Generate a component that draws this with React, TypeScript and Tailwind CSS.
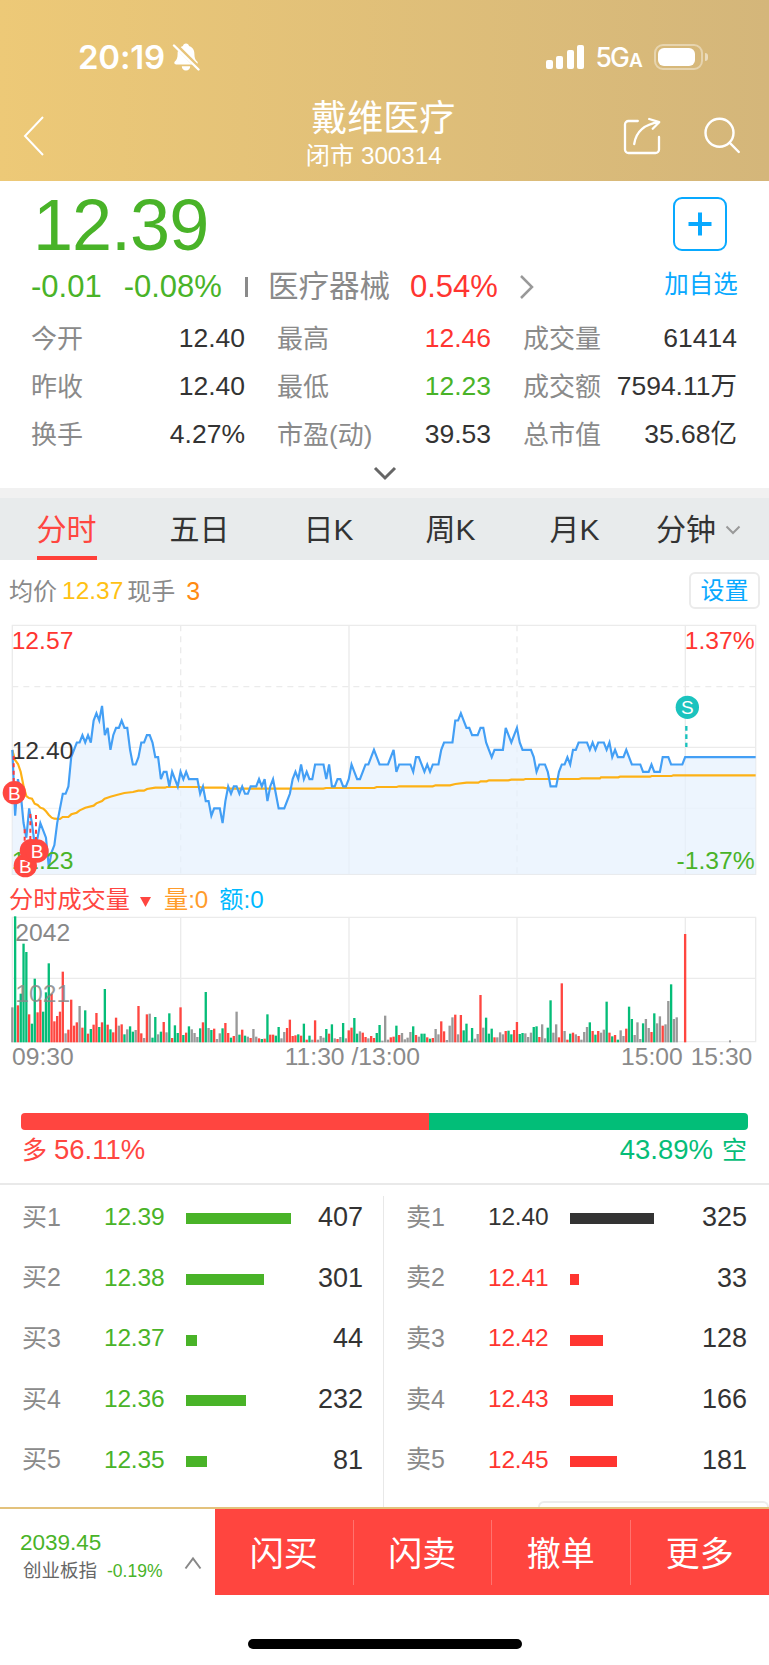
import clsx from "clsx";

const TICKS = [
  0, -9, -4, -6, -10, -12, -8, -10, -13, -12, -10, -11, -12, -16, -14, -13, -10, -8, -6, -6,
  -5, -1, 0, 1, 1, 2, 1, 2, 1, 4, 5, 4, 6, 2, 3, 0, 2, 3, 3, 4,
  3, 3, 0, -2, -2, -1, 1, 1, 2, 2, 1, -1, -1, -4, -3, -3, -5, -3, -4, -5,
  -3, -4, -3, -4, -4, -4, -4, -6, -5, -7, -7, -9, -8, -8, -8, -10, -7, -5, -6, -5,
  -5, -6, -5, -6, -6, -5, -5, -5, -4, -5, -4, -7, -5, -4, -6, -8, -8, -8, -7, -6,
  -4, -3, -4, -2, -4, -3, -4, -4, -2, -2, -2, -2, -4, -2, -5, -5, -4, -4, -5, -5,
  -4, -2, -3, -4, -4, -3, -2, -2, -1, 0, -1, -2, -2, -2, -2, -1, 0, -3, -2, -2,
  -2, -2, -2, -3, -1, -1, -2, -3, -2, -3, -2, -2, -2, 0, 1, 1, 1, 1, 4, 4,
  5, 4, 3, 3, 2, 2, 2, 3, 3, 1, 0, -1, 0, 0, 0, 0, 3, 2, 1, 2,
  3, 1, 0, 0, 0, 0, -1, -3, -2, -2, -2, -3, -5, -5, -5, -3, -2, -2, -1, -2,
  0, 0, 1, 1, 1, 1, 0, 1, 0, 1, 1, 1, 0, 1, -1, 0, -1, -1, -1, 0,
  -1, -2, -2, -2, -2, -3, -3, -3, -2, -3, -3, -3, -1, -1, -1, -2, -2, -2, -2, -2,
  -1,
];

const AVERAGE =
  "37,420 45,450 54,462 62,485 71,530 79,558 87,564 96,566 104,581 113,585 121,593 130,596 138,604 146,614 155,623 163,626 180,627 188,621 205,621 214,613 230,608 239,601 256,593 281,587 289,580 306,573 314,566 331,560 350,555 373,549 399,546 415,542 432,542 441,537 466,533 495,533 500,531 600,531 605,533 670,533 685,536 970,536 978,534 1123,534 1130,531 1190,531 1197,529 1298,529 1307,526 1350,526 1366,522 1400,518 1435,518 1442,514 1460,514 1467,511 1525,511 1534,509 1570,509 1576,507 1736,507 1744,505 1800,505 1803,502 1855,502 1860,500 1950,500 1955,498 2015,498 2020,496 2267,496";

// r = up, g = down, d = flat
const VOLUMES =
  "d105 g378 r111 g146 g296 g271 r84 g56 g191 r90 r128 g92 g150 g237 r145 r63 r79 r92 r212 d27 " +
  "r38 r128 r50 r60 d109 r44 g96 r26 g40 r53 r88 g46 r60 g160 r53 g39 r30 r74 d50 r54 " +
  "g24 d39 g48 g32 d37 r109 r27 d13 r84 d86 g14 g76 d24 g32 r61 d30 g87 r13 g51 g28 " +
  "r105 g22 r29 g48 d39 d28 d16 g42 r60 g151 d43 g37 r41 d10 d27 g42 r58 r28 g14 r19 " +
  "d92 g23 r38 g20 d17 r13 d40 d17 r12 g10 r11 g84 r23 r23 g20 g46 d12 d31 r43 r68 " +
  "r19 r21 g24 r20 g56 r8 g20 d8 r66 d8 d19 d14 g40 r26 g54 d12 r10 d16 g58 d12 " +
  "r36 r44 g73 g26 d33 r29 r16 d12 r19 r13 g28 g52 d5 d80 d8 r15 r17 g50 r22 d28 " +
  "d9 d14 d31 g48 r22 d17 g26 g26 r15 g11 r13 d40 d24 r63 r33 d7 d50 d75 r83 d24 " +
  "r82 g36 g56 d5 g43 d11 d25 r142 d44 g74 g26 g41 r15 d15 d30 d24 r34 g35 g24 r37 " +
  "r61 g25 g28 d27 d16 d29 g46 g48 r16 d54 d12 g44 g126 d29 d54 r15 r177 d34 r8 g26 " +
  "r29 d24 r19 d8 d31 d46 g60 r34 g23 r34 d29 d38 g122 r29 g18 r22 g8 d36 d19 r41 " +
  "g107 g70 d22 d60 d10 g57 d70 d43 r31 g87 d57 d78 r50 d54 d124 g174 d70 d75 d0 d0 " +
  "r325";

const VOLUME_COLORS: Record<string, string> = { r: "#ff4640", g: "#05bd78", d: "#999999" };

const minuteX = (i: number) => 37 + i * 8.41;
const tickY = (t: number) => 419.5 - t * 21.97;

const STATS = [
  [
    { label: "今开", value: "12.40" },
    { label: "最高", value: "12.46", color: "text-[#ff3530]" },
    { label: "成交量", value: "61414" },
  ],
  [
    { label: "昨收", value: "12.40" },
    { label: "最低", value: "12.23", color: "text-[#49b328]" },
    { label: "成交额", value: "7594.11万" },
  ],
  [
    { label: "换手", value: "4.27%" },
    { label: "市盈(动)", value: "39.53" },
    { label: "总市值", value: "35.68亿" },
  ],
];

const BUYS = [
  { label: "买1", price: "12.39", count: 407 },
  { label: "买2", price: "12.38", count: 301 },
  { label: "买3", price: "12.37", count: 44 },
  { label: "买4", price: "12.36", count: 232 },
  { label: "买5", price: "12.35", count: 81 },
];

const SELLS = [
  { label: "卖1", price: "12.40", count: 325 },
  { label: "卖2", price: "12.41", count: 33 },
  { label: "卖3", price: "12.42", count: 128 },
  { label: "卖4", price: "12.43", count: 166 },
  { label: "卖5", price: "12.45", count: 181 },
];

const StatusBar = () => (
  <div className="flex h-[26px] items-center pr-[61px] pl-[78px]">
    <span className="font-[Inter] text-[33px] leading-none font-semibold tracking-[-0.2px]">20:19</span>
    <svg className="ml-[7px] h-[28px] w-[28px]" viewBox="0 0 28 28" fill="currentColor">
      <path d="M14 0.500c1.700 0 2.800 1 3 2.500 3.700 1.200 5.400 4.200 5.400 8 0 4 .8 5.600 2.800 7.600 1 1.100.7 2.900-1.300 2.900H4.100c-2 0-2.300-1.800-1.300-2.900 2-2 2.800-3.600 2.800-7.600 0-3.800 1.700-6.800 5.400-8C11.200 1.500 12.300.500 14 .500zM9.800 23.200h8.400c0 2.500-1.700 4.300-4.200 4.300s-4.200-1.800-4.200-4.300z" />
      <path d="M2 0.500 27.500 26" stroke="#e7c47a" strokeWidth="4.500" />
      <path d="M2 2.500 26.500 26.500" stroke="currentColor" strokeWidth="2.400" strokeLinecap="round" />
    </svg>
    <div className="ml-auto flex h-[24px] items-end gap-[3.500px]">
      <i className="h-[9px] w-[7px] rounded-[2px] bg-white" />
      <i className="h-[13.500px] w-[7px] rounded-[2px] bg-white" />
      <i className="h-[19px] w-[7px] rounded-[2px] bg-white" />
      <i className="h-[24px] w-[7px] rounded-[2px] bg-white" />
    </div>
    <span className="ml-[11px] font-[Inter] text-[26.500px] leading-none font-medium tracking-[-1.8px]">
      5G<span className="ml-px text-[19px] font-semibold">A</span>
    </span>
    <div className="ml-[13px] flex h-[26px] w-[49px] rounded-[9px] border-2 border-white/40 p-[2px]">
      <div className="w-[37px] rounded-[6px] bg-white" />
    </div>
    <i className="ml-[2px] h-[8px] w-[3px] rounded-r-full bg-white/50" />
  </div>
);

const Header = () => (
  <header className="h-[181px] bg-linear-to-r from-[#edc977] to-[#d4b67a] pt-[44px] text-white">
    <StatusBar />
    <div className="flex items-start justify-between pr-[28px] pl-[23px]">
      <svg className="mt-[45px] h-[42px] w-[121px]" viewBox="0 0 121 42" fill="none" stroke="currentColor" strokeWidth="2">
        <path d="M20 2 2 21 20 40" />
      </svg>
      <div className="mt-[27px] flex flex-col items-center">
        <h1 className="text-[36px] leading-[44px]">戴维医疗</h1>
        <p className="mr-[19px] text-[24.200px] leading-[29px] whitespace-pre">闭市 300314</p>
      </div>
      <div className="mt-[46px] flex gap-[42.500px]">
        <svg className="h-[40px] w-[38px]" viewBox="0 0 38 40" fill="none" stroke="currentColor" strokeWidth="2.300" strokeLinecap="round" strokeLinejoin="round">
          <path d="M14.800 5H5.500A3.500 3.500 0 0 0 2 8.500v25A3.500 3.500 0 0 0 5.500 37h27a3.500 3.500 0 0 0 3.500-3.500V21" />
          <path d="M11.200 28C13 16 20 8.500 36 6.200M26.200 3l10 3.200-6.500 6.500" />
        </svg>
        <svg className="h-[38px] w-[38px]" viewBox="0 0 38 38" fill="none" stroke="currentColor" strokeWidth="2.400" strokeLinecap="round">
          <circle cx="16.500" cy="16.700" r="14" />
          <path d="m26.800 26.800 9 9.200" />
        </svg>
      </div>
    </div>
  </header>
);

const Quote = () => (
  <section className="h-[307px] px-[31px]">
    <div className="flex justify-between">
      <div>
        <div className="mt-[8px] ml-[2px] text-[72px] leading-[72px] tracking-[-1px] text-[#49b328]">12.39</div>
        <div className="mt-[5px] flex h-[42px] items-center text-[31px] text-[#49b328]">
          <span>-0.01</span>
          <span className="ml-[22px]">-0.08%</span>
          <i className="ml-[23px] h-[20px] w-[3px] bg-[#8a8a8a]" />
          <span className="ml-[20px] text-[30.500px] text-[#8a8a8a]">医疗器械</span>
          <span className="ml-[20px] text-[#ff3530]">0.54%</span>
          <svg className="ml-[21px] h-[24px] w-[16px]" viewBox="0 0 16 24" fill="none" stroke="#999" strokeWidth="2.500">
            <path d="M2 1 13 12 2 23" />
          </svg>
        </div>
      </div>
      <div className="flex w-[74px] flex-col items-center pt-[16px] text-[#08a9ff]">
        <div className="mr-[2px] flex h-[54px] w-[54px] items-center justify-center rounded-[9px] border-2 border-[#08a9ff]">
          <svg className="h-[24px] w-[24px]" viewBox="0 0 24 24" stroke="currentColor" strokeWidth="4">
            <path d="M12 0.500v23M0.500 12h23" />
          </svg>
        </div>
        <span className="mt-[16px] text-[24.500px] leading-[36px] whitespace-nowrap">加自选</span>
      </div>
    </div>
    <div className="mt-[7px] flex flex-col">
      {STATS.map((row, i) => (
        <div key={i} className="grid h-[48px] grid-cols-[214px_214px_214px] items-center gap-x-[32px]">
          {row.map((stat) => (
            <div key={stat.label} className="flex items-center justify-between whitespace-nowrap">
              <span className="text-[26px] text-[#8a8a8a]">{stat.label}</span>
              <span className={clsx("text-[26.500px]", stat.color || "text-[#333]")}>{stat.value}</span>
            </div>
          ))}
        </div>
      ))}
    </div>
    <svg className="mx-auto mt-[6px] h-[18px] w-[24px]" viewBox="0 0 24 18" fill="none" stroke="#666" strokeWidth="3">
      <path d="m2 3 10 10L22 3" />
    </svg>
  </section>
);

const Tabs = () => (
  <nav className="flex h-[72px] border-t-[10px] border-[#f1f1f1] bg-[#e8ebec] text-[30px] text-[#333]">
    <div className="flex w-[133px] justify-center">
      <span className="flex h-[62px] items-center border-b-4 border-[#ff4039] pt-[5px] text-[#ff4640]">分时</span>
    </div>
    <div className="flex w-[133px] items-center justify-center pt-px">五日</div>
    <div className="flex w-[125px] items-center justify-center pt-px">日K</div>
    <div className="flex w-[119px] items-center justify-center pt-px">周K</div>
    <div className="flex w-[129px] items-center justify-center pt-px">月K</div>
    <div className="flex flex-1 items-center pt-px pl-[17px]">
      分钟
      <svg className="ml-[9px] h-[10px] w-[16px]" viewBox="0 0 16 10" fill="none" stroke="#999" strokeWidth="2">
        <path d="m1.500 1.500 6.500 6.500 6.500-6.500" />
      </svg>
    </div>
  </nav>
);

const Marker = ({ x, y, text, color }: { x: number; y: number; text: string; color: string }) => (
  <g>
    <circle cx={x} cy={y} r="35" fill={color} />
    <text x={x} y={y + 21} textAnchor="middle" fontSize="57" fill="#fff">
      {text}
    </text>
  </g>
);

const PriceChart = () => {
  const points = TICKS.map((t, i) => `${minuteX(i)},${tickY(t)}`).join(" ") + ` 2267,${tickY(-1)}`;
  return (
    <svg className="block h-[270px] w-[769px]" viewBox="0 30 2307 810" fill="none">
      <g stroke="#ebebeb" strokeWidth="4">
        <path d="M37 46H2267V793H37ZM37 412H2267M1047 46V793M2056 46V793" />
        <path d="M37 595H2267" strokeWidth="2" />
        <path d="M37 230H2267M542 46V793M1551 46V793" strokeDasharray="18 15" />
      </g>
      <polygon points={`37,793 ${points} 2267,793`} fill="#e5f1fd" fillOpacity="0.7" />
      <polyline points={AVERAGE} stroke="#fdb116" strokeWidth="6.500" />
      <polyline points={points} stroke="#439ff5" strokeWidth="6.500" />
      <g fontSize="74">
        <text x="35" y="118" fill="#ff3530">12.57</text>
        <text x="35" y="448" fill="#333">12.40</text>
        <text x="35" y="778" fill="#49b328">12.23</text>
        <text x="2264" y="118" textAnchor="end" fill="#ff3530">1.37%</text>
        <text x="2264" y="778" textAnchor="end" fill="#49b328">-1.37%</text>
      </g>
      <path d="M41 438V515M74 658V740M91 612V700M108 615V700" stroke="#ff3b3b" strokeWidth="6" strokeDasharray="12 10" />
      <path d="M2059 348V411" stroke="#18c2bd" strokeWidth="7" strokeDasharray="14 11" />
      <Marker x={43} y={548} text="B" color="#ff4640" />
      <Marker x={76} y={767} text="B" color="#ff4640" />
      <circle cx="94" cy="722" r="35" fill="#ff4640" />
      <Marker x={111} y={723} text="B" color="#ff4640" />
      <Marker x={2062} y={292} text="S" color="#1bc3be" />
    </svg>
  );
};

const VolumeChart = () => (
  <svg className="block h-[160px] w-[769px]" viewBox="0 105 2307 480" fill="none">
    <path
      d="M37 112H2267V485H37ZM37 295H2267M542 112V485M1047 112V485M1551 112V485M2056 112V485"
      stroke="#ebebeb"
      strokeWidth="4"
    />
    <text x="46" y="182" fontSize="74" fill="#888">2042</text>
    {VOLUMES.split(" ").map((bar, i) => {
      const height = Number(bar.slice(1));
      return (
        <rect key={i} x={minuteX(i) - 3.5} y={487 - height} width="7" height={height} fill={VOLUME_COLORS[bar[0]]} />
      );
    })}
    <rect x={minuteX(256) - 3} y="481" width="6" height="6" fill="#999" />
    <text x="46" y="365" fontSize="74" fill="#888" fillOpacity="0.85">1021</text>
    <g fontSize="74" fill="#8a8a8a">
      <text x="36" y="556">09:30</text>
      <text x="1057" y="556" textAnchor="middle">11:30 /13:00</text>
      <text x="2048" y="556" textAnchor="end">15:00</text>
      <text x="2257" y="556" textAnchor="end">15:30</text>
    </g>
  </svg>
);

const OrderList = ({ orders, side }: { orders: typeof BUYS; side: "buy" | "sell" }) => (
  <ul className="w-[385px] pt-[2px]">
    {orders.map((order) => {
      const flat = order.price === "12.40";
      const color = side === "buy" ? "text-[#49b328]" : flat ? "text-[#333]" : "text-[#ff3530]";
      return (
        <li key={order.label} className="flex h-[60.700px] items-center pr-[22px] pl-[22px]">
          <span className="w-[82px] text-[25px] text-[#8a8a8a]">{order.label}</span>
          <span className={clsx("w-[82px] text-[24.500px] tracking-[-0.2px]", color)}>{order.price}</span>
          <span className={clsx("mt-[3px] h-[11px] bg-current", color)} style={{ width: order.count * 0.259 }} />
          <span className="ml-auto text-[27px] text-[#333]">{order.count}</span>
        </li>
      );
    })}
  </ul>
);

const BottomBar = () => (
  <footer className="flex h-[88px] border-t-2 border-[#e3c27c]">
    <div className="flex w-[215px] items-center justify-between pr-[13px] pl-[20px]">
      <div className="pt-[10px]">
        <div className="text-[22.500px] leading-[28px] text-[#49b328]">2039.45</div>
        <div className="flex items-center pl-[3px] text-[18.500px] leading-[28px] text-[#666]">
          创业板指<span className="ml-[10px] text-[17.500px] text-[#49b328]">-0.19%</span>
        </div>
      </div>
      <svg className="mt-[22px] h-[14px] w-[18px] shrink-0" viewBox="0 0 18 14" fill="none" stroke="#888" strokeWidth="2">
        <path d="m1.500 12.500 7.500-10 7.500 10" />
      </svg>
    </div>
    <div className="grid flex-1 grid-cols-4 items-center bg-[#ff453f] text-[34px] text-white">
      {["闪买", "闪卖", "撤单", "更多"].map((action) => (
        <div
          key={action}
          className="flex h-[65px] items-center justify-center border-r border-white/25 pt-[4px] last:border-r-0"
        >
          {action}
        </div>
      ))}
    </div>
  </footer>
);

const App = () => {
  return (
    <div className="h-[1665px] w-[769px] overflow-hidden bg-white font-['Liberation_Sans','Noto_Sans_CJK_SC',sans-serif]">
      <Header />
      <Quote />
      <Tabs />
      <div className="flex h-[60px] items-center pr-[9px] pl-[9px] text-[24px] text-[#8a8a8a]">
        <span className="mt-[3px]">均价</span>
        <span className="mt-[3px] ml-[5px] text-[24.500px] text-[#ffc113]">12.37</span>
        <span className="mt-[3px] ml-[4px]">现手</span>
        <span className="mt-[3px] ml-[11px] text-[25px] text-[#ff8a12]">3</span>
        <span className="ml-auto flex h-[37px] w-[71px] items-center justify-center rounded-[6px] border-2 border-[#ebebeb] pt-px text-[#08a9ff]">
          设置
        </span>
      </div>
      <PriceChart />
      <div className="-mt-[5px] flex h-[30px] items-center pl-[9px] text-[24.200px] text-[#ff4640]">
        <span>分时成交量</span>
        <svg className="mt-[4px] ml-[10px] h-[10px] w-[11px]" viewBox="0 0 11 10" fill="currentColor">
          <path d="M0 0h11L5.500 10z" />
        </svg>
        <span className="ml-[13px] text-[#ff9c2b]">量:0</span>
        <span className="ml-[11px] text-[#00b9ff]">额:0</span>
      </div>
      <VolumeChart />
      <div className="mx-[21px] mt-[38px] flex h-[17px] overflow-hidden rounded-[4px]">
        <div className="bg-[#ff4540]" style={{ width: "56.11%" }} />
        <div className="flex-1 bg-[#02be78]" />
      </div>
      <div className="mx-[22px] flex h-[53px] justify-between text-[27.500px] leading-[40px]">
        <span className="flex gap-[7px] text-[#ff4640]">
          <span className="text-[25px]">多</span>56.11%
        </span>
        <span className="flex gap-[9px] text-[#05bd78]">
          43.89%<span className="text-[25px]">空</span>
        </span>
      </div>
      <div className="relative flex h-[324px] border-t-2 border-[#e9e9e9]">
        <OrderList orders={BUYS} side="buy" />
        <div className="mt-[11px] -ml-[2px] w-px bg-[#e8e8e8]" />
        <OrderList orders={SELLS} side="sell" />
        <div className="absolute right-0 bottom-0 h-[6px] w-[231px] rounded-t-[7px] border-2 border-b-0 border-[#ececec]" />
      </div>
      <BottomBar />
      <div className="mx-auto mt-[44px] h-[10px] w-[274px] rounded-full bg-black" />
    </div>
  );
};

export default App;
